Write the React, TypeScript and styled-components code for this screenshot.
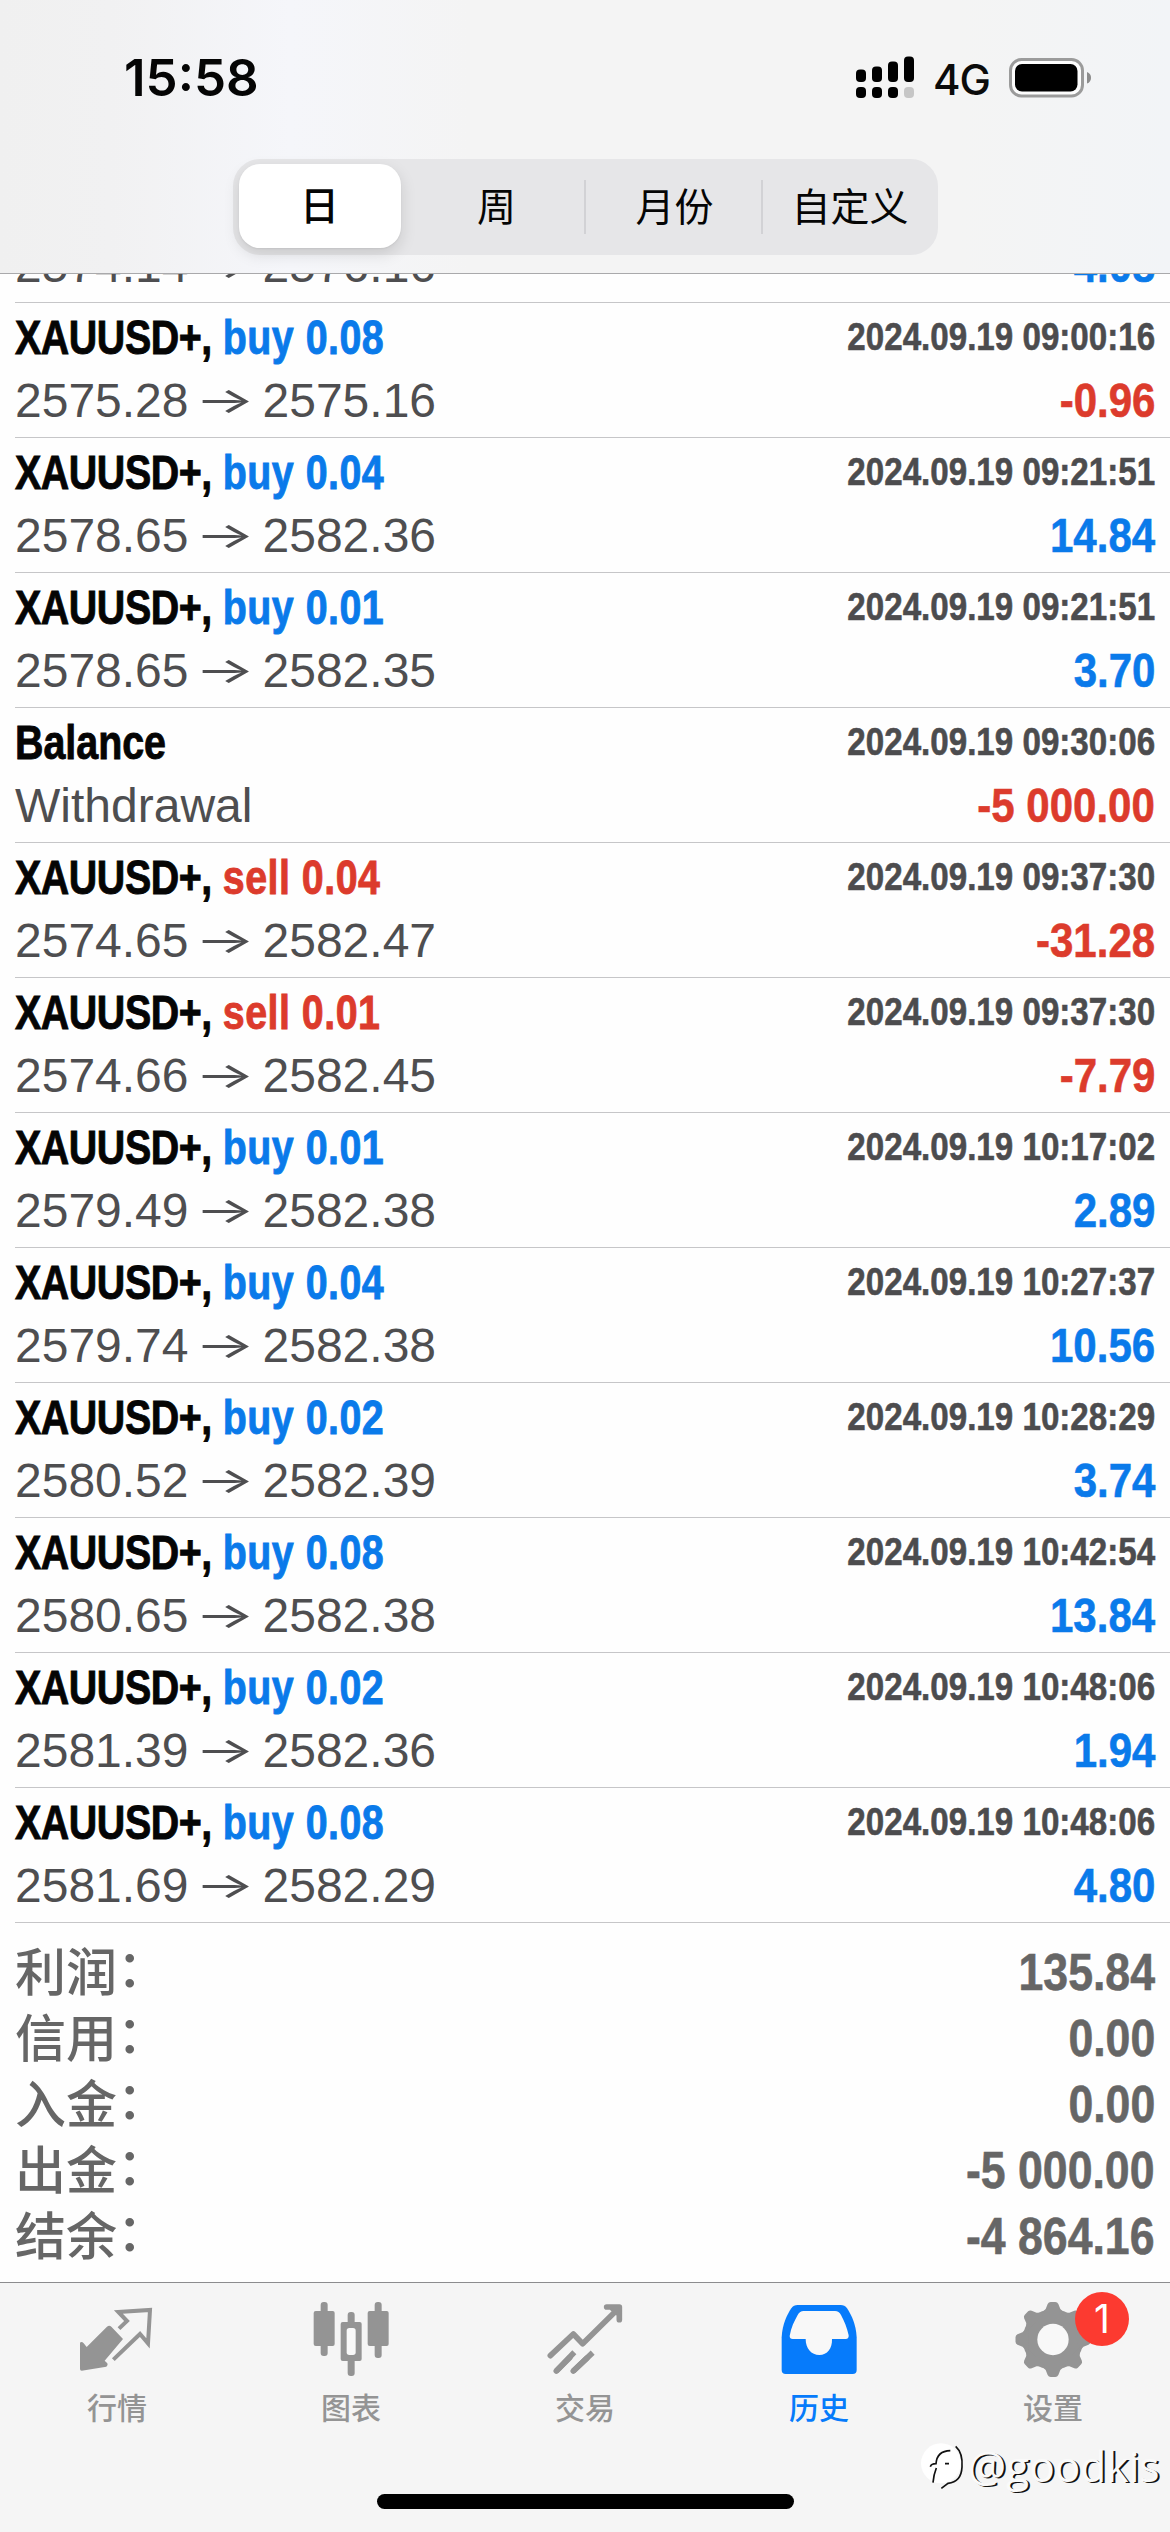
import React from 'react';
import styled, { createGlobalStyle } from 'styled-components';

const BLUE = '#0a7aea';
const RED = '#dc3b2c';
const SANS = '"Liberation Sans", "Noto Sans CJK SC", sans-serif';
const UI = 'Inter, "Noto Sans CJK SC", sans-serif';

const GlobalStyle = createGlobalStyle`
  html, body { margin: 0; padding: 0; background: #fefefe; }
  * { box-sizing: border-box; }
`;

const Screen = styled.div`
  display: flex;
  flex-direction: column;
  width: 1170px;
  height: 2532px;
  overflow: hidden;
  background: #fefefe;
  font-family: ${SANS};
`;

const Header = styled.header`
  flex: none;
  height: 274px;
  display: flex;
  flex-direction: column;
  align-items: center;
  border-bottom: 1px solid #a9a9ab;
  background: linear-gradient(90deg, #f0f0f0 0, #f1f1f2 110px, #f5f6fa 290px, #f4f4f4 470px, #f4f4f4 960px, #f2f4f7 1170px);
`;

const StatusBar = styled.div`
  width: 100%;
  height: 159px;
  padding: 43px 78px 0 124px;
  display: flex;
  justify-content: space-between;
  align-items: flex-start;
  font-family: ${UI};
`;

const Clock = styled.div`
  font-size: 51px;
  font-weight: 600;
  line-height: 70px;
  letter-spacing: 0;
  color: #050505;
`;

const StatusIcons = styled.div`
  display: flex;
  align-items: center;
  height: 70px;
`;

const Network = styled.span`
  width: 93px;
  padding: 3px 0 0 18px;
  font-size: 42px;
  font-weight: 500;
  line-height: 67px;
  letter-spacing: -1px;
  color: #0b0b0b;
`;

const Segments = styled.div`
  width: 705px;
  height: 96px;
  display: grid;
  grid-template-columns: 173px 178px repeat(2, 1fr);
  background: #e6e6e8;
  border-radius: 27px;
`;

const Segment = styled.button<{ $active?: boolean; $divided?: boolean; $shift?: number }>`
  display: flex;
  align-items: center;
  justify-content: center;
  margin: ${p => (p.$active ? '5px 5px 7px 6px' : '21px 0')};
  padding: 0 0 0 ${p => p.$shift ?? 0}px;
  border: 0;
  border-left: ${p => (p.$divided ? '2px solid #d2d2d5' : '0')};
  border-radius: ${p => (p.$active ? '21px' : '0')};
  background: ${p => (p.$active ? '#fff' : 'transparent')};
  box-shadow: ${p => (p.$active ? '0 6px 16px rgba(0,0,0,.13), 0 1px 2px rgba(0,0,0,.06)' : 'none')};
  font-family: ${UI};
  font-size: 39px;
  line-height: 54px;
  font-weight: ${p => (p.$active ? 500 : 400)};
  color: #050505;
`;

const Deals = styled.main`
  flex: none;
  height: 1649px;
  display: flex;
  flex-direction: column;
  justify-content: flex-end;
  overflow: hidden;
`;

const Row = styled.article`
  flex: none;
  height: 135px;
  margin-left: 15px;
  padding: 3px 15px 0 0;
  border-bottom: 1px solid #c6c6c8;
`;

const Line = styled.div`
  display: flex;
  justify-content: space-between;
  height: 63px;
  line-height: 63px;
  font-size: 48px;
  white-space: pre;
`;

const Title = styled.div`
  font-weight: 700;
  color: #050505;
  transform: scaleX(0.82);
  transform-origin: left;
  -webkit-text-stroke: 0.9px currentColor;
`;

const Name = styled.span<{ $track: number }>`
  letter-spacing: ${p => p.$track}px;
`;

const Side = styled.span<{ $color: string }>`
  letter-spacing: 0.6px;
  color: ${p => p.$color};
`;

const Time = styled.time`
  font-size: 39px;
  font-weight: 700;
  line-height: 62px;
  color: #4c4c4e;
  transform: scaleX(0.85);
  transform-origin: right;
  -webkit-text-stroke: 0.6px currentColor;
`;

const Prices = styled.div`
  display: flex;
  color: #4e4e50;
`;

const Arrow = styled.span`
  width: 74px;
  text-align: center;
  font-family: Inter, sans-serif;
  font-size: 48px;
  font-weight: 400;
  transform: translate(-1px, -1px) scale(1.32, 0.76);
`;

const Amount = styled.div<{ $color: string }>`
  font-weight: 700;
  color: ${p => p.$color};
  transform: scaleX(0.875);
  transform-origin: right;
  -webkit-text-stroke: 0.6px currentColor;
`;

const Summary = styled.section`
  flex: 1;
  padding: 17px 15px 0 15px;
`;

const SummaryRow = styled.div`
  display: flex;
  justify-content: space-between;
  height: 66px;
  line-height: 66px;
  font-size: 51px;
  color: #666;
`;

const SummaryLabel = styled.div`
  height: 66px;
  margin-top: -4px;
  font-family: "Noto Sans CJK SC", sans-serif;
  font-weight: 500;
`;

const Colon = styled.span`
  display: inline-block;
  transform: translateY(-4px);
`;

const TabBar = styled.nav`
  flex: none;
  height: 250px;
  display: flex;
  flex-direction: column;
  align-items: center;
  background: #f5f5f5;
  border-top: 1px solid #8c8c8e;
`;

const Tabs = styled.div`
  width: 100%;
  height: 211px;
  display: flex;
`;

const Tab = styled.div<{ $active?: boolean }>`
  position: relative;
  flex: 1;
  display: flex;
  flex-direction: column;
  align-items: center;
  padding-top: 17px;
  color: ${p => (p.$active ? '#067bfb' : '#949494')};
`;

const TabLabel = styled.span`
  margin-top: 4px;
  font-family: "Noto Sans CJK SC", sans-serif;
  font-size: 30px;
  line-height: 44px;
  font-weight: 500;
`;

const Badge = styled.span`
  position: absolute;
  left: 139px;
  top: 9px;
  width: 54px;
  height: 54px;
  border-radius: 50%;
  background: #fc3a30;
  color: #fff;
  font-family: ${UI};
  font-size: 39px;
  line-height: 54px;
  text-align: center;
`;

const HomeIndicator = styled.div`
  width: 417px;
  height: 15px;
  border-radius: 8px;
  background: #000;
`;

const Watermark = styled.div`
  position: absolute;
  left: 921px;
  top: 2438px;
  width: 245px;
  height: 56px;
  display: flex;
  align-items: center;
  gap: 1px;
  font-family: "Open Sans", sans-serif;
  font-size: 42.5px;
  line-height: 56px;
  color: #fafafa;
  text-shadow: 2px 1px 0 #111;
`;

const deals = [
  ['buy', '0.02', '2024.09.19 08:58:21', '2574.14', '2576.16', '4.08'],
  ['buy', '0.08', '2024.09.19 09:00:16', '2575.28', '2575.16', '-0.96'],
  ['buy', '0.04', '2024.09.19 09:21:51', '2578.65', '2582.36', '14.84'],
  ['buy', '0.01', '2024.09.19 09:21:51', '2578.65', '2582.35', '3.70'],
  ['balance', '', '2024.09.19 09:30:06', '', '', '-5 000.00'],
  ['sell', '0.04', '2024.09.19 09:37:30', '2574.65', '2582.47', '-31.28'],
  ['sell', '0.01', '2024.09.19 09:37:30', '2574.66', '2582.45', '-7.79'],
  ['buy', '0.01', '2024.09.19 10:17:02', '2579.49', '2582.38', '2.89'],
  ['buy', '0.04', '2024.09.19 10:27:37', '2579.74', '2582.38', '10.56'],
  ['buy', '0.02', '2024.09.19 10:28:29', '2580.52', '2582.39', '3.74'],
  ['buy', '0.08', '2024.09.19 10:42:54', '2580.65', '2582.38', '13.84'],
  ['buy', '0.02', '2024.09.19 10:48:06', '2581.39', '2582.36', '1.94'],
  ['buy', '0.08', '2024.09.19 10:48:06', '2581.69', '2582.29', '4.80'],
];

const totals = [
  ['利润', '135.84'],
  ['信用', '0.00'],
  ['入金', '0.00'],
  ['出金', '-5 000.00'],
  ['结余', '-4 864.16'],
];

const Signal = () => (
  <svg width="60" height="44" viewBox="855 56 60 44">
    <rect x="856" y="69.5" width="10" height="12.5" rx="4" />
    <rect x="872" y="66.5" width="10" height="15.5" rx="4" />
    <rect x="888" y="61.5" width="10" height="20.5" rx="4" />
    <rect x="904" y="56.5" width="10" height="25.5" rx="4" />
    <rect x="856" y="87" width="10" height="11" rx="4" />
    <rect x="872" y="87" width="10" height="11" rx="4" />
    <rect x="888" y="87" width="10" height="11" rx="4" />
    <rect x="904" y="87" width="10" height="11" rx="4" fill="#c6c6c6" />
  </svg>
);

const Battery = () => (
  <svg width="84" height="42" viewBox="1008 57 84 42">
    <rect x="1010.5" y="59.5" width="72" height="36.5" rx="11" fill="#fdfdfd" stroke="#9b9b9b" strokeWidth="3" />
    <rect x="1015" y="64" width="62.5" height="27.5" rx="7" />
    <path d="M1087 72q4 1.500 4 5.800t-4 5.800z" fill="#8c8c8c" />
  </svg>
);

const QuotesIcon = () => (
  <svg width="78" height="80" viewBox="234 120 234 240" fill="none" stroke="currentColor">
    <path d="M240 248q5-5 11 2l9 11 61-61q7-6 13 0l35 37-55 65 8 8q3 6-3 10l-74 12q-5 0-5-5z" fill="currentColor" stroke="none" />
    <path d="M357 206l24-23-26-27 95-6-6 100-24-28-80 77" strokeWidth="12" />
  </svg>
);

const ChartIcon = () => (
  <svg width="78" height="80" viewBox="934 120 234 240" fill="currentColor">
    <rect x="960" y="126" width="21" height="162" rx="9" />
    <rect x="939" y="153" width="63" height="105" rx="6" />
    <rect x="1041" y="156" width="21" height="192" rx="9" />
    <rect x="1020" y="186" width="63" height="117" rx="6" />
    <rect x="1038" y="204" width="27" height="81" rx="8" fill="#f8f8f8" />
    <rect x="1122" y="126" width="21" height="168" rx="9" />
    <rect x="1101" y="153" width="63" height="105" rx="6" />
  </svg>
);

const TradeIcon = () => (
  <svg width="78" height="80" viewBox="437 120 234 240" fill="none" stroke="currentColor" strokeWidth="17" strokeLinecap="round" strokeLinejoin="round">
    <path d="M450 287l69-65 28 29 105-103" />
    <path d="M468 333l54-56M519 333l58-55" strokeLinecap="butt" />
    <path d="M468 333l40-40M519 333l40-38" />
    <path d="M619 141h38v38M634 143l23 20v-22z" />
  </svg>
);

const HistoryIcon = () => (
  <svg width="78" height="80" viewBox="28 120 234 240" fill="currentColor">
    <path d="M33 232c2-40 16-67 29-87q7-10 19-10h129q12 0 19 10c13 20 27 47 29 87v98q0 12-12 12H45q-12 0-12-12z" />
    <path d="M57 228c4-25 14-45 24-63q6-12 18-12h94q12 0 18 12c10 18 18 38 23 61q1 11-9 11h-41c1 29-14 48-38 48s-41-19-41-48H66q-9 0-9-9z" fill="#f8f8f8" />
  </svg>
);

const lobe = 'M808 164L826 147L832 132Q835 126 841 126H855Q861 126 864 132L870 147L888 164Z';

const SettingsIcon = () => (
  <svg width="78" height="80" viewBox="731 120 234 240" fill="currentColor">
    <circle cx="848" cy="238.500" r="91" />
    {[0, 45, 90, 135, 180, 225, 270, 315].map(a => (
      <path key={a} d={lobe} transform={`rotate(${a} 848 238.500)`} />
    ))}
    <circle cx="848" cy="238.500" r="47" fill="#f8f8f8" />
  </svg>
);

const WatermarkLogo = () => (
  <svg width="46" height="52" viewBox="456 552 138 156" fill="none">
    <circle cx="516" cy="622" r="60" fill="#fff" />
    <path d="M560 571q22 20 19 62-2 45-42 49l-20 15" stroke="#111" strokeWidth="5" />
    <path d="M484 632q3-9 17-9 3-38 43-39M502 636q-8 20-10 44M528 623h12" stroke="#111" strokeWidth="5" />
  </svg>
);

const tabs = [
  { label: '行情', Icon: QuotesIcon },
  { label: '图表', Icon: ChartIcon },
  { label: '交易', Icon: TradeIcon },
  { label: '历史', Icon: HistoryIcon, active: true },
  { label: '设置', Icon: SettingsIcon, badge: '1' },
];

export default function App() {
  return (
    <Screen>
      <GlobalStyle />
      <Header>
        <StatusBar>
          <Clock>15:58</Clock>
          <StatusIcons>
            <Signal />
            <Network>4G</Network>
            <Battery />
          </StatusIcons>
        </StatusBar>
        <Segments>
          <Segment $active>日</Segment>
          <Segment $shift={4}>周</Segment>
          <Segment $divided $shift={3}>月份</Segment>
          <Segment $divided>自定义</Segment>
        </Segments>
      </Header>
      <Deals>
        {deals.map(([side, lots, time, open, close, amount], i) => (
          <Row key={i}>
            <Line>
              {side === 'balance' ? (
                <Title><Name $track={0}>Balance</Name></Title>
              ) : (
                <Title>
                  <Name $track={-0.5}>XAUUSD+,</Name>{' '}
                  <Side $color={side === 'buy' ? BLUE : RED}>{side} {lots}</Side>
                </Title>
              )}
              <Time>{time}</Time>
            </Line>
            <Line>
              <Prices>
                {side === 'balance' ? 'Withdrawal' : <>{open}<Arrow>→</Arrow>{close}</>}
              </Prices>
              <Amount $color={amount.startsWith('-') ? RED : BLUE}>{amount}</Amount>
            </Line>
          </Row>
        ))}
      </Deals>
      <Summary>
        {totals.map(([label, value]) => (
          <SummaryRow key={label}>
            <SummaryLabel>{label}<Colon>：</Colon></SummaryLabel>
            <Amount $color="#666">{value}</Amount>
          </SummaryRow>
        ))}
      </Summary>
      <TabBar>
        <Tabs>
          {tabs.map(({ label, Icon, active, badge }) => (
            <Tab key={label} $active={active}>
              <Icon />
              <TabLabel>{label}</TabLabel>
              {badge && <Badge>{badge}</Badge>}
            </Tab>
          ))}
        </Tabs>
        <HomeIndicator />
      </TabBar>
      <Watermark>
        <WatermarkLogo />
        <span>@goodkis</span>
      </Watermark>
    </Screen>
  );
}
